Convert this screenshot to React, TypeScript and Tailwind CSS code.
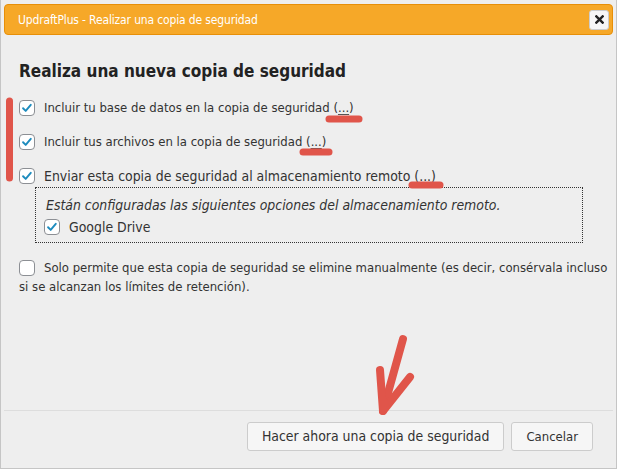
import type { ReactNode } from 'react'

function Check({ checked = true }: { checked?: boolean }) {
  return (
    <span className="inline-flex h-4 w-4 shrink-0 items-center justify-center rounded-[4px] border border-[#8c8f94] bg-white align-middle">
      {checked && (
        <svg viewBox="0 0 16 16" className="h-4 w-4">
          <path d="M3.5 8.3 L6.5 11.3 L12.3 4.3" fill="none" stroke="#1e8cbe" strokeWidth="2.2" strokeLinecap="round" strokeLinejoin="round" />
        </svg>
      )}
    </span>
  )
}

function Dots() {
  return (
    <span>
      (<span className="underline decoration-[#555] underline-offset-2">...</span>)
    </span>
  )
}

function Row({ children, wide = false }: { children: ReactNode; wide?: boolean }) {
  return (
    <div className="flex h-[34px] items-center gap-[9px]">
      <Check />
      <span className={wide ? 'text-[13.9px]' : ''}>{children}</span>
    </div>
  )
}

export default function App() {
  return (
    <div
      className="relative flex h-[469px] w-[617px] flex-col border-x border-b border-[#c5c5c5] bg-[#eeeeee] px-[3px] pt-[4px] text-[13px] text-[#333]"
      style={{ fontFamily: '"DejaVu Sans Condensed", "DejaVu Sans", sans-serif' }}
    >
      <div className="flex h-[31px] items-center justify-between rounded-[4px] border border-[#e78f08] bg-[#f6a828] pl-[13px] pr-[3px]">
        <span className="text-[12px] tracking-[-0.15px] text-white">UpdraftPlus - Realizar una copia de seguridad</span>
        <button className="flex h-[20px] w-[20px] items-center justify-center rounded-[3px] border border-[#cccccc] bg-[#f6f6f6]">
          <svg viewBox="0 0 10 10" className="h-[9px] w-[9px]">
            <path d="M1.5 1.5 L8.5 8.5 M8.5 1.5 L1.5 8.5" stroke="#222" strokeWidth="2.6" strokeLinecap="square" />
          </svg>
        </button>
      </div>

      <div className="flex-1 pl-[15px] pr-[12px]">
        <h2 className="mt-[25px] text-[17px] font-bold leading-[22px] text-[#222]">
          Realiza una nueva copia de seguridad
        </h2>
        <div className="mt-[9px]">
          <Row>
            Incluir tu base de datos en la copia de seguridad <Dots />
          </Row>
          <Row>
            Incluir tus archivos en la copia de seguridad <Dots />
          </Row>
          <Row wide>
            Enviar esta copia de seguridad al almacenamiento remoto <Dots />
          </Row>
        </div>
        <div className="ml-[16px] mr-[18px] mt-[-6px] border border-dotted border-[#333] px-[10px] pb-[4px] pt-[8px]">
          <div className="text-[13.9px] italic leading-[18px]">Están configuradas las siguientes opciones del almacenamiento remoto.</div>
          <div className="ml-[-2px] mt-[3px] flex items-center gap-[9px]">
            <Check />
            <span className="text-[13.9px]">Google Drive</span>
          </div>
        </div>
        <p className="mr-[-10px] mt-[15px] leading-[19px]">
          <Check checked={false} />
          <span className="ml-[9px]">
            Solo permite que esta copia de seguridad se elimine manualmente (es decir, consérvala incluso si se alcanzan los límites de retención).
          </span>
        </p>
      </div>

      <div className="flex justify-end gap-[7px] border-t border-[#dddddd] pb-[17px] pr-[20px] pt-[11px]">
        <button className="h-[29px] rounded-[3px] border border-[#cccccc] bg-[#f6f6f6] px-[14px] text-[13.9px] text-[#333]">
          Hacer ahora una copia de seguridad
        </button>
        <button className="h-[29px] rounded-[3px] border border-[#cccccc] bg-[#f6f6f6] px-[14px] text-[#333]">
          Cancelar
        </button>
      </div>

      <svg className="pointer-events-none absolute left-0 top-0" width="617" height="469" viewBox="0 0 617 469">
        <g stroke="#e0554a" strokeLinecap="round" fill="none">
          <path d="M8.5 101 L8.5 178" strokeWidth="7" />
          <path d="M328 119 L358 119" strokeWidth="7" />
          <path d="M302 152 L328 152" strokeWidth="7" />
          <path d="M411 185 L439 185" strokeWidth="7" />
          <path d="M402 339 L382 411" strokeWidth="8" />
          <path d="M379 370 L382 411 L409 377" strokeWidth="8" strokeLinejoin="round" />
        </g>
      </svg>
    </div>
  )
}
